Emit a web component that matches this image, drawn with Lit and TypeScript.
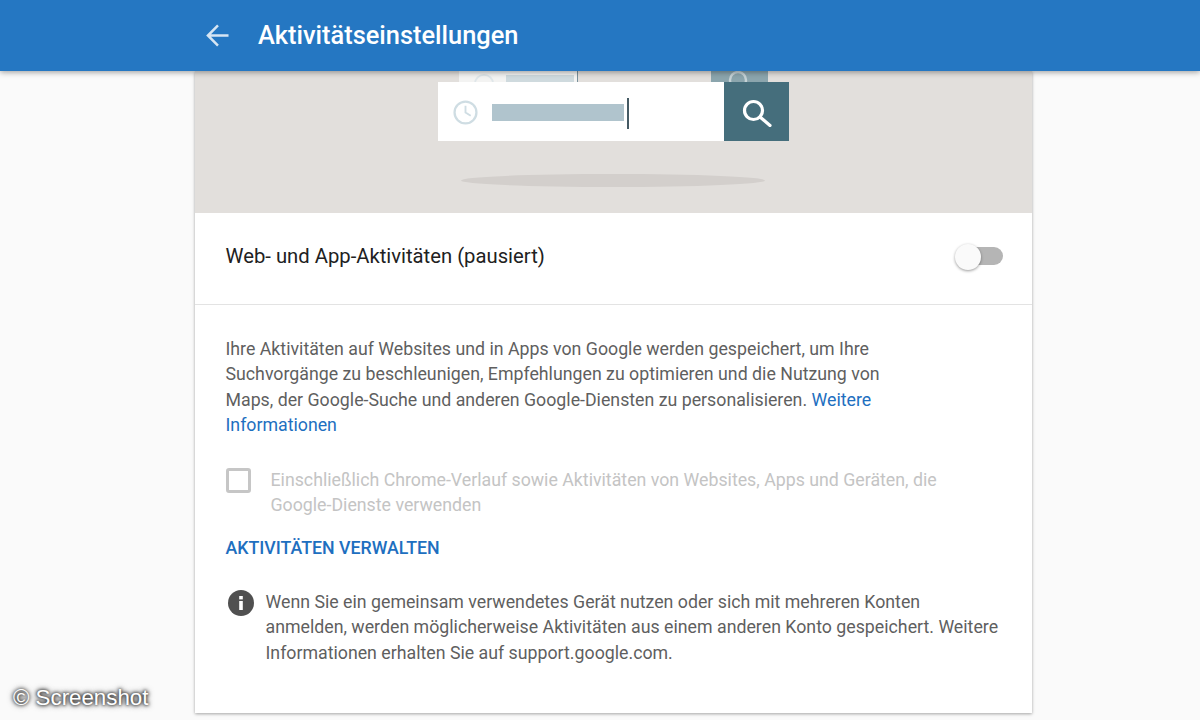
import { LitElement, html, css } from "lit";
import { customElement } from "lit/decorators.js";

@customElement("app-root")
export class AppRoot extends LitElement {
  static styles = css`
    :host { display: block; width: 1200px; height: 720px; overflow: hidden; position: relative; background: #fafafa; font-family: Roboto, "Liberation Sans", sans-serif; }
    .bar { height: 71px; background: #2577c2; display: flex; align-items: center; padding-left: 206px; box-shadow: 0 1px 6px rgba(0,0,0,.4); position: relative; z-index: 2; }
    .bar svg { width: 23px; height: 23px; margin-right: 29px; flex: none; }
    .bar h1 { margin: 0; color: #fff; font-size: 25.4px; font-weight: 500; line-height: 71px; }
    .card { width: 837px; height: 642px; margin-left: 195px; background: #fff; box-shadow: 0 1px 3px rgba(0,0,0,.35); }
    .art { height: 142px; background: #e2dfdc; position: relative; overflow: hidden; }
    .art > * { position: absolute; }
    .back { left: 264px; top: 0; width: 119px; height: 11px; background: #f3f3f2; }
    .back-btn { left: 516px; top: 0; width: 57px; height: 11px; background: #8ba5ad; }
    .back-bar { left: 311px; top: 4px; width: 68px; height: 7px; background: #cfdade; }
    .back-caret { left: 382px; top: 0; width: 1px; height: 11px; background: #78909c; }
    .back-clock { left: 278px; top: 2px; width: 22px; height: 22px; }
    .back-glass { left: 530px; top: 0; width: 26px; height: 11px; overflow: hidden; }
    .box { left: 243px; top: 11px; width: 286px; height: 59px; background: #fff; }
    .go { left: 529px; top: 11px; width: 65px; height: 59px; background: #456e7c; display: flex; align-items: center; justify-content: center; }
    .go svg { width: 30px; height: 30px; }
    .clock { left: 258px; top: 29px; width: 25px; height: 25px; }
    .fill { left: 297px; top: 33px; width: 132px; height: 17px; background: #b0c4cd; }
    .caret { left: 432px; top: 27px; width: 2px; height: 31px; background: #455a64; }
    .shadow { left: 266px; top: 103px; width: 304px; height: 13px; border-radius: 50%; background: #d3cfcc; }
    .row { height: 91px; border-bottom: 1px solid #e3e3e3; display: flex; align-items: center; justify-content: space-between; padding: 0 29px 0 30.5px; }
    .row span { font-size: 20.25px; color: #212121; position: relative; top: -3px; }
    .toggle { width: 48px; height: 26px; position: relative; top: -2px; }
    .track { position: absolute; left: 5px; right: 0; top: 3px; height: 18px; border-radius: 9px; background: #b5b5b5; }
    .knob { position: absolute; left: 0; top: 0; width: 26px; height: 26px; border-radius: 50%; background: #fafafa; box-shadow: 0 1px 3px rgba(0,0,0,.4); }
    .content { padding: 32px 30px 0 30.5px; font-size: 17.75px; line-height: 25.3px; color: #5f5f5f; }
    .content p { margin: 0; }
    .intro { width: 670px; }
    a { color: #1e6fc0; text-decoration: none; }
    .check { display: flex; gap: 20px; margin-top: 30px; color: #c4c4c4; }
    .check p { max-width: 690px; }
    .box-check { width: 19px; height: 19px; border: 3px solid #c6c6c6; border-radius: 3px; flex: none; }
    .manage { display: block; margin-top: 17px; font-weight: 500; font-size: 17.75px; }
    .note { display: flex; gap: 12px; margin-top: 29px; padding-left: 2px; }
    .note svg { width: 26px; height: 26px; flex: none; }
    .stamp { position: absolute; left: 13px; top: 685px; font-family: "Liberation Sans", sans-serif; font-size: 22.3px; color: #fff; line-height: 26px; text-shadow: 0 0 3px #333, 0 0 4px #333, 0 0 6px #555; }
  `;

  render() {
    return html`
      <div class="bar">
        <svg viewBox="0 0 24 24" fill="none" stroke="#d6e5f3" stroke-width="2.6"><path d="M23.5 12H2M12.5 1.5 2 12l10.5 10.5"></path></svg>
        <h1>Aktivitätseinstellungen</h1>
      </div>
      <div class="card">
        <div class="art">
          <div class="back"></div>
          <div class="back-btn"></div>
          <div class="back-bar"></div>
          <div class="back-caret"></div>
          <svg class="back-clock" viewBox="0 0 24 24" fill="none" stroke="#dfe6e9" stroke-width="2"><circle cx="12" cy="12" r="10"></circle></svg>
          <svg class="back-glass" viewBox="0 0 26 11" fill="none" stroke="#c5d2d6" stroke-width="2.4"><circle cx="13" cy="9" r="8"></circle></svg>
          <div class="box"></div>
          <div class="go"><svg viewBox="0 0 30 30" fill="none" stroke="#fff" stroke-width="3.2"><circle cx="11.5" cy="13.5" r="9"></circle><path d="M18 20l10 8.5" stroke-linecap="round"></path></svg></div>
          <svg class="clock" viewBox="0 0 24 24" fill="none" stroke="#cfdde3" stroke-width="2.2"><circle cx="12" cy="12" r="10.5"></circle><path d="M12 5.5V12l5 3.2" stroke-width="1.8"></path></svg>
          <div class="fill"></div>
          <div class="caret"></div>
          <div class="shadow"></div>
        </div>
        <div class="row">
          <span>Web- und App-Aktivitäten (pausiert)</span>
          <div class="toggle"><div class="track"></div><div class="knob"></div></div>
        </div>
        <div class="content">
          <p class="intro">Ihre Aktivitäten auf Websites und in Apps von Google werden gespeichert, um Ihre Suchvorgänge zu beschleunigen, Empfehlungen zu optimieren und die Nutzung von Maps, der Google-Suche und anderen Google-Diensten zu personalisieren. <a href="#">Weitere Informationen</a></p>
          <div class="check">
            <div class="box-check"></div>
            <p>Einschließlich Chrome-Verlauf sowie Aktivitäten von Websites, Apps und Geräten, die Google-Dienste verwenden</p>
          </div>
          <a class="manage" href="#">AKTIVITÄTEN VERWALTEN</a>
          <div class="note">
            <svg viewBox="0 0 26 26"><circle cx="13" cy="13" r="13" fill="#505050"></circle><rect x="11.2" y="11" width="3.6" height="9" fill="#fff"></rect><rect x="11.2" y="6" width="3.6" height="3.4" fill="#fff"></rect></svg>
            <p>Wenn Sie ein gemeinsam verwendetes Gerät nutzen oder sich mit mehreren Konten anmelden, werden möglicherweise Aktivitäten aus einem anderen Konto gespeichert. Weitere Informationen erhalten Sie auf support.google.com.</p>
          </div>
        </div>
      </div>
      <div class="stamp">© Screenshot</div>
    `;
  }
}
